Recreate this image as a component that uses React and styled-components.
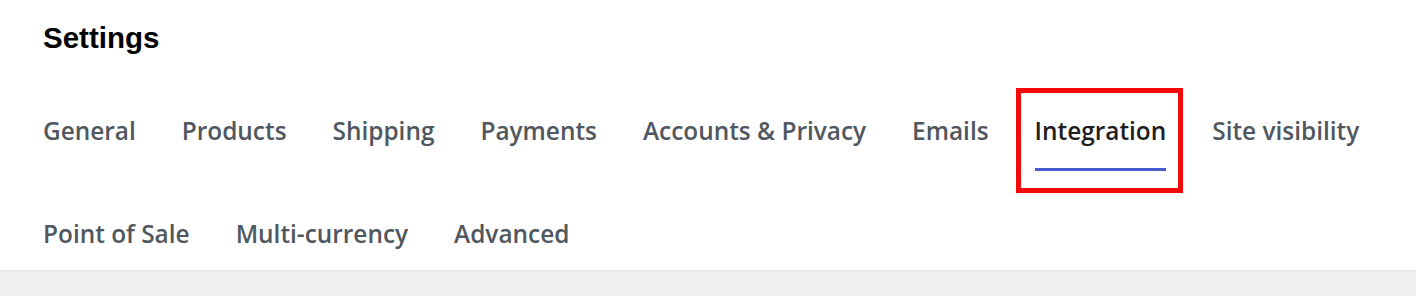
import React, { useState } from 'react';
import styled, { createGlobalStyle } from 'styled-components';

const GlobalStyle = createGlobalStyle`
	html, body {
		margin: 0;
		padding: 0;
		background: #fff;
	}
	body {
		font-family: "Open Sans", "Noto Sans", sans-serif;
	}
`

const Page = styled.div`
	width: 1416px;
	height: 296px;
	overflow: hidden;
	display: flex;
	flex-direction: column;
`

const Header = styled.header`
	background: #fff;
	padding: 20px 43px 0;
	.title{
		margin: 0;
		font-family: "Liberation Sans", Arial, sans-serif;
		font-weight: 700;
		font-size: 29.5px;
		line-height: 36px;
		color: #000;
	}
`

const TabList = styled.nav`
	display: flex;
	flex-wrap: wrap;
	column-gap: 46px;
	row-gap: 35px;
	margin-top: 47px;
	margin-bottom: -4px;
`

const Tab = styled.a`
	position: relative;
	display: block;
	padding: 12px 0 21px;
	font-size: 24.4px;
	font-weight: 600;
	line-height: 32px;
	color: ${p => p.$active ? '#1e1e1e' : '#50575e'};
	border-bottom: 3px solid ${p => p.$active ? '#4a5bd0' : 'transparent'};
	text-decoration: none;
	cursor: pointer;
	white-space: nowrap;
	${p => p.$active && `
		&::after{
			content: '';
			position: absolute;
			left: -19px;
			right: -17px;
			top: -15px;
			bottom: -25px;
			border: 5px solid #f20a0a;
		}
	`}
`

const Content = styled.main`
	flex: 1;
	background: #efefef;
	border-top: 1px solid #e6e6e6;
`

const tabs = [
	'General',
	'Products',
	'Shipping',
	'Payments',
	'Accounts & Privacy',
	'Emails',
	'Integration',
	'Site visibility',
	'Point of Sale',
	'Multi-currency',
	'Advanced',
]

const App = () => {
	const [active, setActive] = useState('Integration');

	return (
		<Page>
			<GlobalStyle />
			<Header>
				<h1 className="title">Settings</h1>
				<TabList>
					{tabs.map(tab =>
						<Tab key={tab} $active={tab === active} onClick={() => setActive(tab)}>
							{tab}
						</Tab>
					)}
				</TabList>
			</Header>
			<Content />
		</Page>
	);
}

export default App;
